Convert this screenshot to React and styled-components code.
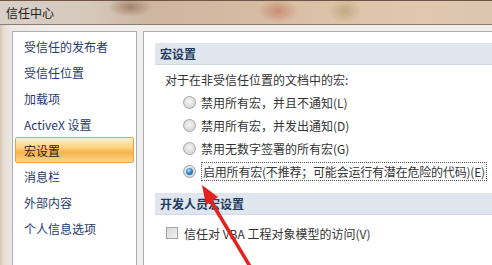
import React from "react";
import styled, { createGlobalStyle } from "styled-components";

const GlobalStyle = createGlobalStyle`
  html, body {
    margin: 0;
    padding: 0;
    background: #fff;
  }
`;

const Window = styled.div`
  position: relative;
  width: 492px;
  height: 265px;
  overflow: hidden;
  display: flex;
  flex-direction: column;
  font-family: "Noto Sans CJK SC", "Noto Sans", sans-serif;
  font-size: 12px;
  background: linear-gradient(to right, #d9c6b4 0, #e6ddd4 4px, #ece8e4 12px, #f1efed 60px);
`;

const TitleBar = styled.div`
  flex: none;
  height: 23px;
  display: flex;
  align-items: center;
  padding-left: 6px;
  color: #1d1d1d;
  border-top: 1px solid #6e5546;
  border-bottom: 1px solid #8a7d72;
  background:
    radial-gradient(ellipse 22px 10px at 130px 6px, rgba(150, 110, 85, 0.75), transparent),
    radial-gradient(ellipse 20px 12px at 278px 10px, rgba(190, 110, 80, 0.6), transparent),
    radial-gradient(ellipse 16px 12px at 345px 10px, rgba(170, 150, 95, 0.55), transparent),
    linear-gradient(to right, #d8d0c9 0, #d6c8bb 90px, #cdb6a2 150px, #d6bba3 250px, #dcc2a8 330px, #e0c8ae 420px, #dcc6b2 492px);
`;

const Body = styled.div`
  flex: 1;
  display: flex;
  gap: 6px;
  padding: 6px 0 0 12px;
  min-height: 0;
`;

const Sidebar = styled.ul`
  width: 125px;
  flex: none;
  box-sizing: border-box;
  margin: 0;
  padding: 1px 2px 0;
  list-style: none;
  background: #fff;
  border: 1px solid #a9aeb4;
  border-bottom: none;
`;

const NavItem = styled.li`
  height: 26px;
  box-sizing: border-box;
  display: flex;
  align-items: center;
  padding-left: 8px;
  white-space: nowrap;
  border: 1px solid ${({ $active }) => ($active ? "#e3a44a" : "transparent")};
  border-radius: 2px;
  color: ${({ $active }) => ($active ? "#2b2013" : "#1f3a70")};
  background: ${({ $active }) =>
    $active
      ? "linear-gradient(to bottom, #fdeec8 0%, #fbd88a 35%, #f8b44c 60%, #fcd68c 100%)"
      : "transparent"};
`;

const Main = styled.div`
  flex: 1;
  min-width: 0;
  background: #fff;
  border-left: 1px solid #a9aeb4;
  border-top: 1px solid #a9aeb4;
  padding: 11px 0 0 11px;
  display: flex;
  flex-direction: column;
  white-space: nowrap;
`;

const SectionHeader = styled.div`
  height: 21px;
  display: flex;
  align-items: center;
  padding-left: 5px;
  margin-top: ${({ $gap }) => $gap || 0}px;
  background: #dfe6ee;
  border-bottom: 1px solid #d2dbe5;
  color: #1e3a5f;
  font-weight: bold;
`;

const Intro = styled.div`
  height: 23px;
  margin-top: 3px;
  display: flex;
  align-items: center;
  padding-left: 10px;
  color: #333;
`;

const OptionRow = styled.label`
  height: 23px;
  display: flex;
  align-items: center;
  gap: 5px;
  padding-left: 28px;
  color: #333;
`;

const Radio = styled.span`
  width: 13px;
  height: 13px;
  box-sizing: border-box;
  border-radius: 50%;
  border: 1px solid #a6a6a6;
  background: radial-gradient(circle at 50% 40%, #f6f6f6 0, #dcdcdc 60%, #c9c9c9 100%);
  display: flex;
  align-items: center;
  justify-content: center;
  flex: none;

  &::after {
    content: "";
    display: ${({ $checked }) => ($checked ? "block" : "none")};
    width: 7px;
    height: 7px;
    border-radius: 50%;
    background: radial-gradient(circle at 40% 35%, #bfe6ff 0, #3a8fd0 40%, #0b4c8c 100%);
  }
`;

const Focus = styled.span`
  padding: 0 1px;
  line-height: 17px;
  border: 1px dotted #555;
  letter-spacing: -0.2px;
`;

const CheckRow = styled.label`
  height: 22px;
  margin-top: 7px;
  display: flex;
  align-items: center;
  gap: 6px;
  padding-left: 11px;
  color: #333;
`;

const Checkbox = styled.span`
  width: 12px;
  height: 12px;
  box-sizing: border-box;
  border: 1px solid #a4a4a4;
  background: linear-gradient(135deg, #d8d8d8 0, #f2f2f2 100%);
  flex: none;
`;

const Arrow = styled.svg`
  position: absolute;
  left: 0;
  top: 0;
  pointer-events: none;
`;

const navItems = [
  "受信任的发布者",
  "受信任位置",
  "加载项",
  "ActiveX 设置",
  "宏设置",
  "消息栏",
  "外部内容",
  "个人信息选项",
];

const options = [
  "禁用所有宏，并且不通知(L)",
  "禁用所有宏，并发出通知(D)",
  "禁用无数字签署的所有宏(G)",
];

export default function App() {
  return (
    <>
      <GlobalStyle />
      <Window>
        <TitleBar>信任中心</TitleBar>
        <Body>
          <Sidebar>
            {navItems.map((item) => (
              <NavItem key={item} $active={item === "宏设置"}>
                {item}
              </NavItem>
            ))}
          </Sidebar>
          <Main>
            <SectionHeader>宏设置</SectionHeader>
            <Intro>对于在非受信任位置的文档中的宏:</Intro>
            {options.map((opt) => (
              <OptionRow key={opt}>
                <Radio />
                <span>{opt}</span>
              </OptionRow>
            ))}
            <OptionRow>
              <Radio $checked />
              <Focus>启用所有宏(不推荐；可能会运行有潜在危险的代码)(E)</Focus>
            </OptionRow>
            <SectionHeader $gap={10}>开发人员宏设置</SectionHeader>
            <CheckRow>
              <Checkbox />
              <span>信任对 VBA 工程对象模型的访问(V)</span>
            </CheckRow>
          </Main>
        </Body>
        <Arrow width="492" height="265" viewBox="0 0 492 265">
          <line x1="251" y1="268" x2="209" y2="198" stroke="#e3211d" strokeWidth="3.5" />
          <polygon points="202,185 218,197 206,205" fill="#e3211d" />
        </Arrow>
      </Window>
    </>
  );
}
